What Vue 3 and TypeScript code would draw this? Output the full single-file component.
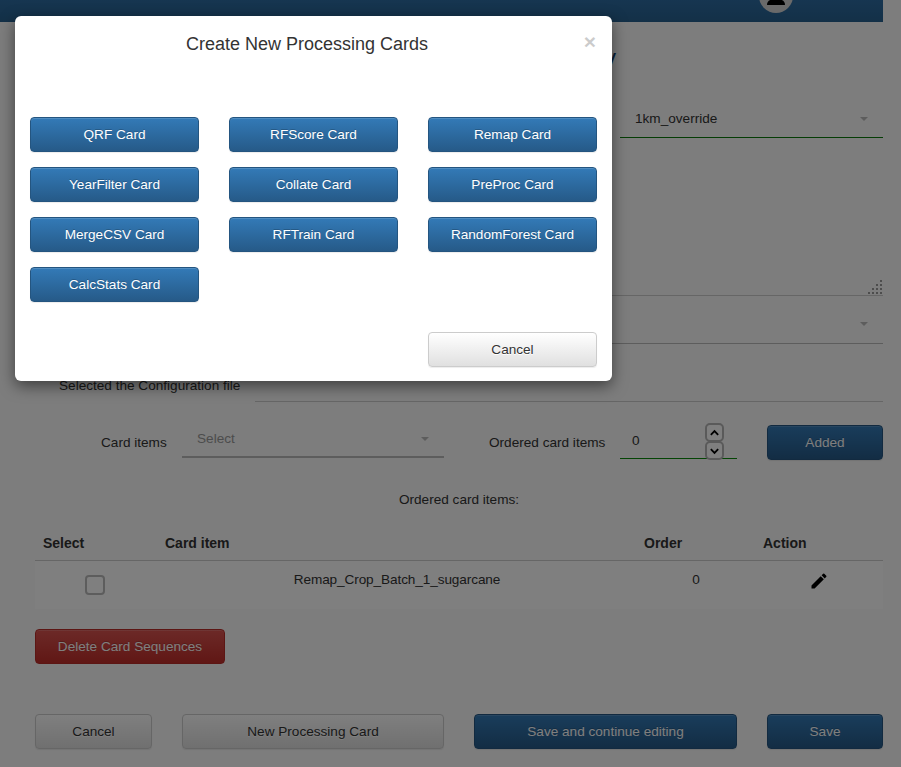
<script setup lang="ts">
const cardTypes = [
  'QRF Card', 'RFScore Card', 'Remap Card',
  'YearFilter Card', 'Collate Card', 'PreProc Card',
  'MergeCSV Card', 'RFTrain Card', 'RandomForest Card',
  'CalcStats Card'
]
</script>

<template>
  <div class="page">
    <header class="topbar">
      <svg class="avatar" viewBox="0 0 34 34">
        <circle cx="17" cy="17" r="17" fill="#d4d4d4" />
        <circle cx="17" cy="13" r="7" fill="#000" />
        <path d="M8 26c0-4 3-6 9-6s9 2 9 6z" fill="#000" />
      </svg>
      <span class="username">admin</span>
    </header>

    <main class="content">
      <h2 class="title">Processing Card Sequence Entry</h2>

      <div class="field-top">
        <div class="select">
          <span>1km_override</span>
          <i class="caret"></i>
        </div>
      </div>

      <div class="textarea-line">
        <svg class="grip" viewBox="0 0 14 14" fill="#9a9a9a">
          <rect x="12" y="0" width="2" height="2" /><rect x="8" y="4" width="2" height="2" />
          <rect x="12" y="4" width="2" height="2" /><rect x="4" y="8" width="2" height="2" />
          <rect x="8" y="8" width="2" height="2" /><rect x="12" y="8" width="2" height="2" />
          <rect x="0" y="12" width="2" height="2" /><rect x="4" y="12" width="2" height="2" />
          <rect x="8" y="12" width="2" height="2" /><rect x="12" y="12" width="2" height="2" />
        </svg>
      </div>

      <div class="select-line"><i class="caret"></i></div>

      <div class="config-row">
        <label>Selected the Configuration file</label>
        <div class="config-input"></div>
      </div>

      <div class="items-row">
        <label class="items-label">Card items</label>
        <div class="select items-select">
          <span class="placeholder">Select</span>
          <i class="caret"></i>
        </div>
        <label class="order-label">Ordered card items</label>
        <div class="order-input">
          <span>0</span>
          <button class="spin spin-up">
            <svg viewBox="0 0 12 8"><path d="M2 6l4-4 4 4" /></svg>
          </button>
          <button class="spin spin-down">
            <svg viewBox="0 0 12 8"><path d="M2 2l4 4 4-4" /></svg>
          </button>
        </div>
        <button class="btn primary added">Added</button>
      </div>

      <p class="ordered-title">Ordered card items:</p>

      <div class="table">
        <div class="thead">
          <div class="col-select">Select</div>
          <div class="col-name">Card item</div>
          <div class="col-order">Order</div>
          <div class="col-action">Action</div>
        </div>
        <div class="tbody-row">
          <div class="cell-check"><span class="checkbox"></span></div>
          <div class="cell-name">Remap_Crop_Batch_1_sugarcane</div>
          <div class="cell-order">0</div>
          <div class="cell-action">
            <svg viewBox="0 0 24 24" width="20" height="20">
              <path d="M3 17.25V21h3.75L17.81 9.94l-3.75-3.75L3 17.25zM20.71 7.04a1 1 0 0 0 0-1.41l-2.34-2.34a1 1 0 0 0-1.41 0l-1.83 1.83 3.75 3.75 1.83-1.83z" />
            </svg>
          </div>
        </div>
      </div>

      <button class="btn danger delete">Delete Card Sequences</button>

      <div class="footer">
        <button class="btn default f-cancel">Cancel</button>
        <button class="btn default f-new">New Processing Card</button>
        <button class="btn primary f-continue">Save and continue editing</button>
        <button class="btn primary f-save">Save</button>
      </div>
    </main>

    <div class="backdrop"></div>

    <div class="modal">
      <div class="modal-head">
        <h4>Create New Processing Cards</h4>
        <span class="close">×</span>
      </div>
      <div class="card-grid">
        <button v-for="name in cardTypes" :key="name" class="btn primary">{{ name }}</button>
      </div>
      <div class="modal-foot">
        <button class="btn default">Cancel</button>
      </div>
    </div>
  </div>
</template>

<style>
html, body {
  margin: 0;
  background: #fff;
}
</style>

<style scoped>
.page {
  position: relative;
  width: 901px;
  height: 767px;
  overflow: hidden;
  background: #fafafa;
  font-family: "Liberation Sans", Arial, sans-serif;
  font-size: 13.6px;
  color: #333;
}

.topbar {
  display: flex;
  justify-content: flex-end;
  align-items: flex-end;
  width: 883px;
  height: 22px;
  padding-right: 35px;
  box-sizing: border-box;
  background: linear-gradient(#2d6ca2, #27618f);
  overflow: hidden;
}

.avatar {
  flex: none;
  width: 34px;
  height: 34px;
  margin-bottom: 9px;
}

.username {
  flex: none;
  margin: 0 0 20px 6px;
  color: #fff;
  font-size: 18px;
  line-height: 18px;
}

.content {
  width: 883px;
  padding-left: 35px;
  box-sizing: border-box;
}

.title {
  margin: 22px 0 0;
  width: 581px;
  height: 40px;
  font-size: 24px;
  font-weight: 400;
  line-height: 28px;
  text-align: right;
  white-space: nowrap;
  color: #123f6e;
}

.field-top {
  display: flex;
  justify-content: flex-end;
  margin-top: 16px;
}

.select {
  position: relative;
  width: 263px;
  height: 38px;
  padding: 10px 0 0 15px;
  box-sizing: border-box;
  border-bottom: 1px solid #0a7a0a;
  line-height: 17px;
}

.caret {
  position: absolute;
  right: 15px;
  top: 17px;
  border: 4px solid transparent;
  border-top-color: #bbb;
  border-bottom: 0;
}

.textarea-line {
  position: relative;
  height: 158px;
  box-sizing: border-box;
  border-bottom: 1px solid #ccc;
}

.grip {
  position: absolute;
  right: 1px;
  bottom: 1px;
  width: 14px;
  height: 14px;
}

.select-line {
  position: relative;
  height: 48px;
  box-sizing: border-box;
  border-bottom: 1px solid #bbb;
}

.select-line .caret {
  top: 26px;
}

.config-row {
  display: flex;
  align-items: flex-start;
  height: 58px;
  padding-left: 24px;
}

.config-row label {
  width: 196px;
  flex: none;
  margin-top: 34px;
  line-height: 16px;
}

.config-input {
  flex: 1;
  height: 58px;
  box-sizing: border-box;
  border-bottom: 1px solid #ccc;
}

.items-row {
  position: relative;
  display: flex;
  align-items: flex-start;
  height: 59px;
}

.items-label {
  margin: 33px 0 0 66px;
  width: 81px;
  flex: none;
  line-height: 16px;
}

.items-select {
  flex: none;
  width: 262px;
  height: 37px;
  margin-top: 19px;
  padding-top: 9px;
  border-bottom: 2px solid #bbb;
  color: #999;
}

.items-select .placeholder {
  display: block;
}

.items-select .caret {
  top: 16px;
}

.order-label {
  flex: none;
  width: 131px;
  margin: 33px 0 0 45px;
  line-height: 16px;
}

.order-input {
  position: relative;
  flex: none;
  width: 117px;
  height: 37px;
  margin-top: 20px;
  padding: 11px 0 0 12px;
  box-sizing: border-box;
  border-bottom: 1px solid #0a8a0a;
  line-height: 16px;
}

.spin {
  position: absolute;
  left: 85px;
  width: 19px;
  height: 19px;
  padding: 0;
  display: flex;
  align-items: center;
  justify-content: center;
  background: #fff;
  border: 2px solid #b4b4b4;
  border-radius: 5px;
}

.spin svg {
  width: 11px;
  height: 8px;
  fill: none;
  stroke: #000;
  stroke-width: 2;
}

.spin-up {
  top: 1px;
}

.spin-down {
  top: 19px;
}

.added {
  width: 116px;
  height: 35px;
  margin: 23px 0 0 30px;
  flex: none;
}

.ordered-title {
  margin: 0;
  height: 41px;
  padding-top: 31px;
  box-sizing: border-box;
  text-align: center;
  line-height: 16px;
}

.table {
  margin-top: 19px;
}

.thead {
  display: grid;
  grid-template-columns: 120px 484px 114px 130px;
  height: 40px;
  box-sizing: border-box;
  border-bottom: 1px solid #ccc;
  font-size: 14px;
  font-weight: 700;
  align-items: center;
  padding-top: 5px;
}

.col-select {
  padding-left: 8px;
}

.col-name,
.col-action {
  padding-left: 10px;
}

.col-order {
  padding-left: 5px;
}

.tbody-row {
  display: grid;
  grid-template-columns: 120px 484px 114px 130px;
  height: 48px;
  background: #fff;
  text-align: center;
}

.cell-name,
.cell-order {
  padding-top: 11px;
  line-height: 16px;
}

.cell-name {
  letter-spacing: -0.1px;
}

.cell-check {
  padding-top: 14px;
}

.checkbox {
  display: block;
  width: 16px;
  height: 16px;
  margin: 0 auto;
  border: 2px solid #bbb;
  border-radius: 4px;
}

.cell-action {
  padding: 10px 0 0 1px;
}

.btn {
  display: block;
  padding: 0 0 1px;
  box-sizing: border-box;
  font-family: inherit;
  font-size: 13.6px;
  text-align: center;
  border-radius: 4px;
  border: 1px solid;
}

.primary {
  color: #fff;
  background: linear-gradient(#337ab7, #265a88);
  border-color: #245580;
  text-shadow: 0 -1px 0 rgba(0, 0, 0, 0.2);
  box-shadow: inset 0 1px 0 rgba(255, 255, 255, 0.15), 0 1px 1px rgba(0, 0, 0, 0.075);
}

.default {
  color: #333;
  background: linear-gradient(#fff, #e0e0e0);
  border-color: #ccc;
  text-shadow: 0 1px 0 #fff;
  box-shadow: inset 0 1px 0 rgba(255, 255, 255, 0.15), 0 1px 1px rgba(0, 0, 0, 0.075);
}

.danger {
  color: #fff;
  background: linear-gradient(#d9534f, #c12e2a);
  border-color: #b92c28;
  text-shadow: 0 -1px 0 rgba(0, 0, 0, 0.2);
  box-shadow: inset 0 1px 0 rgba(255, 255, 255, 0.15);
}

.delete {
  width: 190px;
  height: 35px;
  margin-top: 20px;
}

.footer {
  display: flex;
  gap: 30px;
  margin-top: 50px;
}

.footer .btn {
  height: 35px;
  flex: none;
}

.f-cancel {
  width: 117px;
}

.f-new {
  width: 262px;
}

.f-continue {
  width: 263px;
}

.f-save {
  width: 116px;
}

.backdrop {
  position: absolute;
  inset: 0;
  background: rgba(0, 0, 0, 0.5);
}

.modal {
  position: absolute;
  left: 15px;
  top: 16px;
  width: 597px;
  height: 365px;
  box-sizing: border-box;
  background: #fff;
  border-radius: 6px;
  box-shadow: 0 5px 15px rgba(0, 0, 0, 0.5);
}

.modal-head {
  position: relative;
  display: flex;
  justify-content: center;
  height: 101px;
  padding: 18px 13px 0 0;
  box-sizing: border-box;
}

.modal-head h4 {
  margin: 0;
  height: 20px;
  font-size: 18px;
  font-weight: 400;
  line-height: 20px;
  color: #333;
}

.close {
  position: absolute;
  right: 16px;
  top: 15px;
  font-size: 21px;
  font-weight: 700;
  line-height: 21px;
  color: #000;
  opacity: 0.2;
}

.card-grid {
  display: grid;
  grid-template-columns: repeat(3, 169px);
  grid-auto-rows: 35px;
  gap: 15px 30px;
  padding-left: 15px;
}

.modal-foot {
  display: flex;
  justify-content: flex-end;
  margin-top: 30px;
  padding-right: 15px;
}

.modal-foot .btn {
  width: 169px;
  height: 35px;
}
</style>
